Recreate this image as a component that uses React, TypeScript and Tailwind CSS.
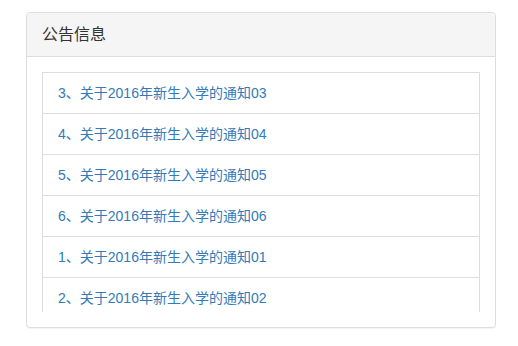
const notices = [
  '3、关于2016年新生入学的通知03',
  '4、关于2016年新生入学的通知04',
  '5、关于2016年新生入学的通知05',
  '6、关于2016年新生入学的通知06',
  '1、关于2016年新生入学的通知01',
  '2、关于2016年新生入学的通知02',
]

export default function App() {
  return (
    <div
      className="w-[518px] h-[346px] bg-white pt-[12px] pl-[26px]"
      style={{ fontFamily: '"Liberation Sans", "Noto Sans CJK SC", sans-serif' }}
    >
      <div className="w-[470px] border border-[#ddd] rounded bg-white shadow-[0_1px_1px_rgba(0,0,0,0.05)]">
        <div className="h-[44px] px-[15px] flex items-center bg-[#f5f5f5] border-b border-[#ddd] rounded-t">
          <h3 className="text-[16px] text-[#333] leading-6">公告信息</h3>
        </div>
        <div className="p-[15px]">
          <div className="h-[240px] overflow-hidden">
            <ul>
              {notices.map((n, i) => (
                <li
                  key={n}
                  className={
                    'px-[15px] py-[10px] border border-[#ddd] text-[14px] leading-5 text-[#337ab7] ' +
                    (i > 0 ? '-mt-px' : '')
                  }
                >
                  <a href="#">{n}</a>
                </li>
              ))}
            </ul>
          </div>
        </div>
      </div>
    </div>
  )
}
